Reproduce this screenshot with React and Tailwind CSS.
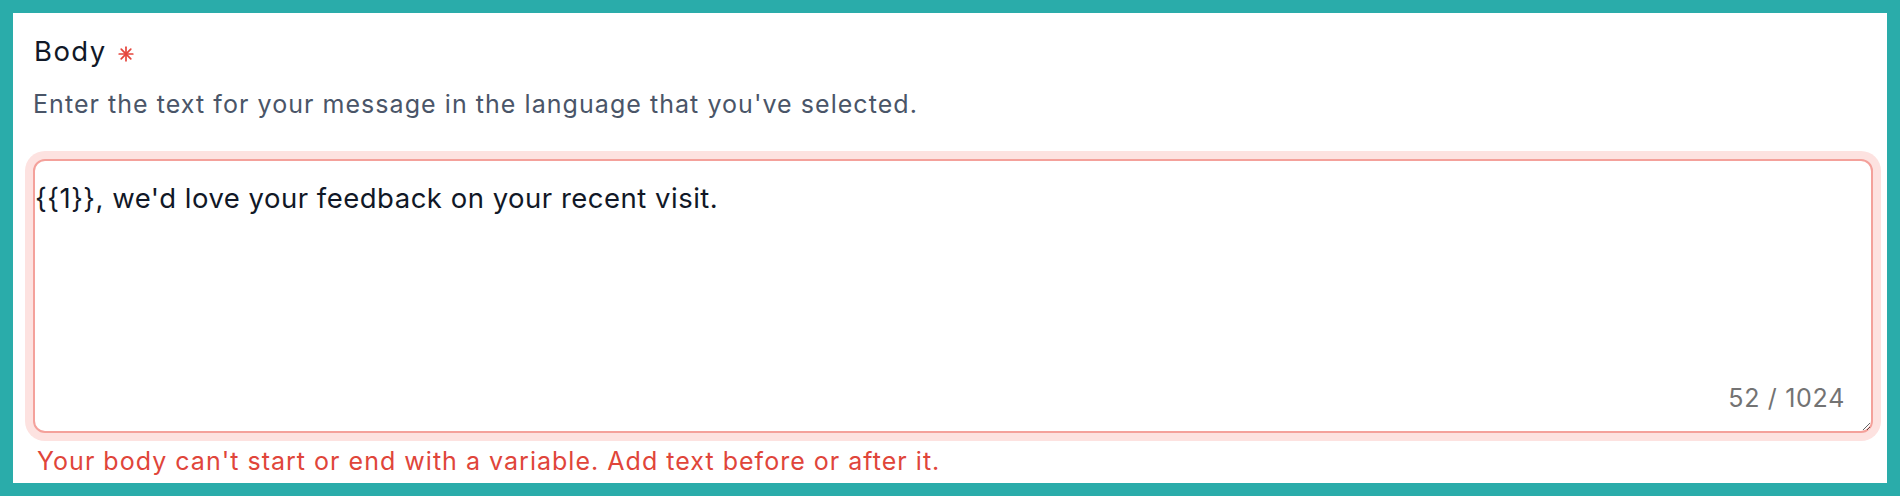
import React from "react";

function Asterisk() {
  return (
    <svg width="16" height="16" viewBox="0 0 16 16" className="ml-[11px] mt-[6px]" aria-hidden="true">
      <g stroke="#e5453c" strokeWidth="1.7" strokeLinecap="round">
        <line x1="8" y1="1.2" x2="8" y2="14.8" />
        <line x1="1.2" y1="8" x2="14.8" y2="8" />
        <line x1="3.2" y1="3.2" x2="12.8" y2="12.8" />
        <line x1="12.8" y1="3.2" x2="3.2" y2="12.8" />
      </g>
    </svg>
  );
}

export default function App() {
  return (
    <div className="w-[1900px] h-[496px] bg-[#2aacaa] p-[13px]" style={{ fontFamily: "Inter, 'Noto Sans', sans-serif" }}>
      <div className="h-full bg-white pl-[20px] pr-[14px] pt-[22px] flex flex-col">
        <div className="flex items-center pl-[1px]">
          <span className="text-[27.5px] leading-[32px] tracking-[1.4px] text-[#111827]">Body</span>
          <Asterisk />
        </div>
        <p className="mt-[21px] text-[25px] leading-[32px] tracking-[1.05px] text-[#4a5568]">
          Enter the text for your message in the language that you've selected.
        </p>
        <div className="relative mt-[39px]">
          <textarea
            readOnly
            defaultValue={"{{1}}, we'd love your feedback on your recent visit."}
            className="block w-full h-[274px] resize border-2 border-[#f4a19b] rounded-[12px] ring-[8px] ring-[#fde2e0] outline-none pl-0 pt-[19px] text-[27.5px] leading-[36px] tracking-[0.5px] text-[#111827] bg-white"
            style={{ fontFamily: "Inter, 'Noto Sans', sans-serif" }}
          />
          <span className="absolute right-[28px] bottom-[19px] text-[25px] leading-[32px] tracking-[0.7px] text-[#737373]">
            52 / 1024
          </span>
        </div>
        <p className="mt-[12px] pl-[4px] text-[25px] leading-[32px] tracking-[1.02px] text-[#e0453a]">
          Your body can't start or end with a variable. Add text before or after it.
        </p>
      </div>
    </div>
  );
}
